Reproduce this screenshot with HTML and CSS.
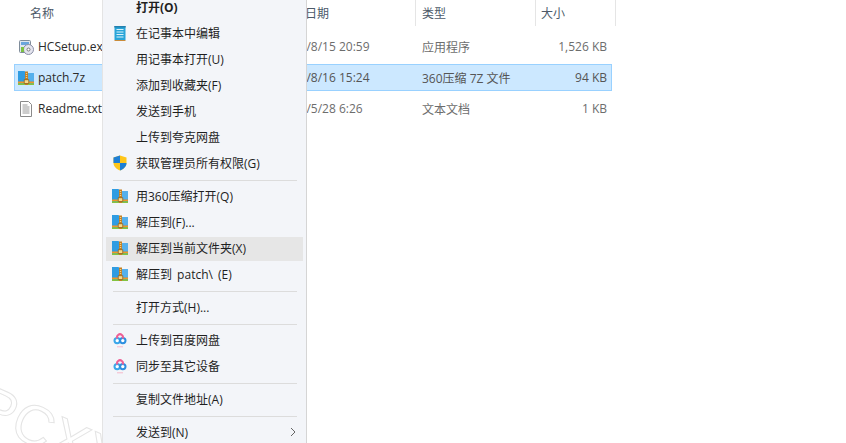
FILE: index.html
```html
<!DOCTYPE html>
<html lang="zh-CN">
<head>
<meta charset="utf-8">
<title>patch.7z</title>
<link rel="stylesheet" href="styles.css">
</head>
<body>
<svg class="defs" width="0" height="0" aria-hidden="true">
  <symbol id="zip" viewBox="0 0 16 16">
    <path d="M0 1h6.500l1.500 2h8v12H0z" fill="#2f9ce2"/>
    <rect x="9.500" y="3" width="6.500" height="8.500" fill="#55b0ec"/>
    <rect x="0" y="11.500" width="16" height="1.800" fill="#f0962a"/>
    <rect x="0" y="13.300" width="16" height="1.700" fill="#84c341"/>
    <rect x="7" y="1.500" width="3" height="13.500" fill="#c27f22"/>
    <path d="M7.800 3.500h1.400M7.800 5.500h1.400M7.800 7.500h1.400" stroke="#fbe3a6" stroke-width=".8"/>
    <rect x="6.200" y="9.800" width="4.600" height="3.700" fill="#f6d98a" stroke="#8a5a14" stroke-width=".7"/>
  </symbol>
  <symbol id="cloud" viewBox="0 0 16 16">
    <circle cx="5.200" cy="8.600" r="2.700" fill="#fff" stroke="#3aa7ea" stroke-width="2"/>
    <circle cx="10.800" cy="8.600" r="2.700" fill="#fff" stroke="#2d8fe0" stroke-width="2"/>
    <path d="M5.500 6.600a2.900 2.900 0 1 1 5 0" fill="none" stroke="#ee5f95" stroke-width="2"/>
    <path d="M5 14.800h6" stroke="#f6b9cb" stroke-width="1"/>
  </symbol>
</svg>

<main class="explorer">
  <div class="header">
    <span class="hcell hname">名称</span>
    <span class="hcell hdate">修改日期</span>
    <span class="hcell htype">类型</span>
    <span class="hcell hsize">大小</span>
  </div>
  <div class="files">
    <div class="file">
      <span class="fname">
        <svg class="ficon" viewBox="0 0 16 16">
          <rect x="1.500" y="1.500" width="11" height="12" rx="1" fill="#dfe6ee" stroke="#7f8c9a"/>
          <rect x="3" y="3" width="8" height="3" fill="#6aa5dc"/>
          <circle cx="10.500" cy="10.500" r="5" fill="#e4e4ee" stroke="#8a8fa6"/>
          <circle cx="10.500" cy="10.500" r="1.500" fill="#fff" stroke="#777"/>
          <path d="M3 8h3v5H3z" fill="#7cc043"/>
        </svg>
        HCSetup.exe
      </span>
      <span class="fdate">2019/8/15 20:59</span>
      <span class="ftype">应用程序</span>
      <span class="fsize">1,526 KB</span>
    </div>
    <div class="file selected">
      <span class="fname"><svg class="ficon"><use href="#zip"/></svg>patch.7z</span>
      <span class="fdate">2019/8/16 15:24</span>
      <span class="ftype">360压缩 7Z 文件</span>
      <span class="fsize">94 KB</span>
    </div>
    <div class="file">
      <span class="fname">
        <svg class="ficon" viewBox="0 0 16 16">
          <path d="M2.500 .5h8l3 3v12h-11z" fill="#fff" stroke="#8a8a8a"/>
          <path d="M4.500 4h5M4.500 6h7M4.500 8h7M4.500 10h7M4.500 12h7" stroke="#9a9a9a"/>
        </svg>
        Readme.txt
      </span>
      <span class="fdate">2019/5/28 6:26</span>
      <span class="ftype">文本文档</span>
      <span class="fsize">1 KB</span>
    </div>
  </div>
</main>

<div class="watermark">PCXY</div>

<nav class="menu">
  <div class="item bold"><span class="slot"></span>打开(O)</div>
  <div class="item"><span class="slot">
    <svg class="micon" viewBox="0 0 16 16">
      <rect x="2.500" y="1" width="11" height="14" fill="#28a4d8"/>
      <path d="M4.500 4.500h7M4.500 7h7M4.500 9.500h7M4.500 12h7" stroke="#d7f1fb"/>
      <path d="M3 1v1.500M5 1v1.500M7 1v1.500M9 1v1.500M11 1v1.500M13 1v1.500" stroke="#1b5d86"/>
      <path d="M2.500 15.500h11" stroke="#c98b3a"/>
    </svg></span>在记事本中编辑</div>
  <div class="item"><span class="slot"></span>用记事本打开(U)</div>
  <div class="item"><span class="slot"></span>添加到收藏夹(F)</div>
  <div class="item"><span class="slot"></span>发送到手机</div>
  <div class="item"><span class="slot"></span>上传到夸克网盘</div>
  <div class="item"><span class="slot">
    <svg class="micon" viewBox="0 0 16 16">
      <path d="M8 .5 14.500 2.500V8c0 3.500-3 6-6.500 7.500C4.500 14 1.500 11.500 1.500 8V2.500z" fill="#ffc61a"/>
      <path d="M8 .5V8H1.500V2.500z" fill="#1d7fd6"/>
      <path d="M8 8h6.500c0 3.500-3 6-6.500 7.500z" fill="#1d7fd6"/>
    </svg></span>获取管理员所有权限(G)</div>
  <div class="sep"></div>
  <div class="item"><span class="slot"><svg class="micon"><use href="#zip"/></svg></span>用360压缩打开(Q)</div>
  <div class="item"><span class="slot"><svg class="micon"><use href="#zip"/></svg></span>解压到(F)...</div>
  <div class="item hover"><span class="slot"><svg class="micon"><use href="#zip"/></svg></span>解压到当前文件夹(X)</div>
  <div class="item wide"><span class="slot"><svg class="micon"><use href="#zip"/></svg></span>解压到 patch\ (E)</div>
  <div class="sep"></div>
  <div class="item"><span class="slot"></span>打开方式(H)...</div>
  <div class="sep"></div>
  <div class="item"><span class="slot"><svg class="micon"><use href="#cloud"/></svg></span>上传到百度网盘</div>
  <div class="item"><span class="slot"><svg class="micon"><use href="#cloud"/></svg></span>同步至其它设备</div>
  <div class="sep"></div>
  <div class="item"><span class="slot"></span>复制文件地址(A)</div>
  <div class="sep"></div>
  <div class="item"><span class="slot"></span>发送到(N)
    <svg class="arrow" viewBox="0 0 6 10"><path d="M1 1l4 4-4 4" fill="none" stroke="#666" stroke-width="1"/></svg>
  </div>
</nav>
</body>
</html>
```
FILE: styles.css
```css
html, body {
  margin: 0;
  padding: 0;
  width: 846px;
  height: 443px;
  overflow: hidden;
  background: #fff;
  font-family: "Open Sans", "Noto Sans CJK SC", sans-serif;
  font-size: 12px;
}
.defs { position: absolute; }
.explorer {
  display: flex;
  flex-direction: column;
  width: 616px;
}
.header {
  display: grid;
  grid-template-columns: 248px 138px 120px 80px;
  padding-left: 30px;
  height: 26px;
  color: #4d5a69;
}
.hcell {
  display: flex;
  align-items: center;
  height: 26px;
  border-right: 1px solid #e5e5e5;
  box-sizing: border-box;
}
.hname { border-right: 0; }
.hdate { padding-left: 3px; }
.htype { padding-left: 6px; }
.hsize { padding-left: 5px; }
.files {
  display: flex;
  flex-direction: column;
  padding-top: 5px;
  margin-left: 14px;
  width: 598px;
}
.file {
  display: grid;
  grid-template-columns: 264px 138px 113px 1fr;
  align-items: center;
  height: 31px;
  box-sizing: border-box;
  border: 1px solid transparent;
  color: #6d6d6d;
}
.selected {
  height: 27px;
  margin: 2px 0;
  background: #cce8ff;
  border-color: #99d1ff;
  color: #555;
}
.fname {
  display: flex;
  align-items: center;
  gap: 4px;
  padding-left: 3px;
  color: #2b2b2b;
  white-space: nowrap;
}
.ftype { padding-left: 5px; }
.fsize { text-align: right; padding-right: 4px; }
.ficon { width: 16px; height: 16px; flex: none; }
.watermark {
  position: absolute;
  left: -32px;
  top: 366px;
  font-family: "Liberation Sans", sans-serif;
  font-size: 56px;
  color: transparent;
  -webkit-text-stroke: 1px #e4e4e4;
  transform: rotate(24deg);
  transform-origin: left bottom;
  white-space: nowrap;
}
.menu {
  position: absolute;
  left: 102px;
  top: -6px;
  width: 203px;
  height: 449px;
  overflow: hidden;
  display: flex;
  flex-direction: column;
  background: #f3f5f9;
  border-left: 1px solid #e4e4e4;
  border-right: 1px solid #d5d5d5;
  color: #1f1f1f;
}
.item {
  position: relative;
  display: flex;
  flex: none;
  align-items: center;
  box-sizing: border-box;
  height: 24px;
  margin: 1px 3px;
  white-space: nowrap;
}
.bold { font-weight: 700; }
.hover {
  margin: 2px 3px 0;
  padding-bottom: 2px;
  background: #e6e6e6;
}
.wide { word-spacing: 2px; }
.slot {
  display: flex;
  justify-content: center;
  width: 30px;
  flex: none;
}
.micon { width: 16px; height: 16px; margin-left: -2px; }
.sep {
  flex: none;
  height: 1px;
  margin: 4px 9px 2px 10px;
  background: #dcdcdc;
}
.arrow {
  position: absolute;
  right: 7px;
  top: 7px;
  width: 6px;
  height: 10px;
}
```
